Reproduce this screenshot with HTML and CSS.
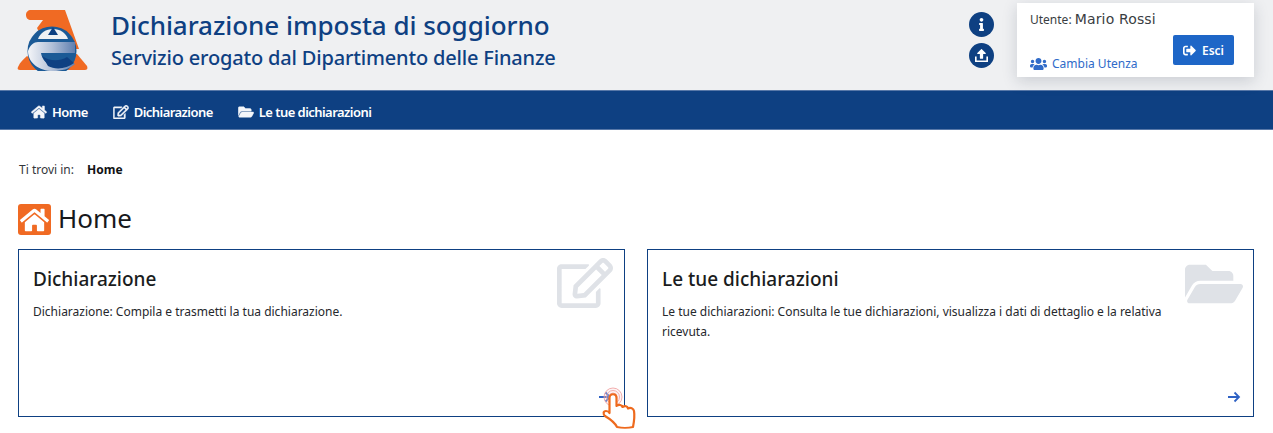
FILE: index.html
```html
<!DOCTYPE html>
<html lang="it">
<head>
<meta charset="utf-8">
<title>Dichiarazione imposta di soggiorno</title>
<link rel="stylesheet" href="styles.css">
</head>
<body>
<header class="top">
  <svg class="logo" viewBox="0 0 72 62" aria-hidden="true">
    <defs>
      <linearGradient id="eg" x1="0" x2="1" y1="0" y2="0">
        <stop offset="0" stop-color="#f4f5f8"/>
        <stop offset="0.5" stop-color="#b4c2d9"/>
        <stop offset="1" stop-color="#5f7fb0"/>
      </linearGradient>
    </defs>
    <path class="or" d="M14 1H48L62 40H30L20 19 26 11H14C11 11 9 9 9 6 9 3 11 1 14 1Z"/>
    <path class="or" d="M1 58C3 53 7 50 10 47L30 61H3C1 61 0 60 1 58Z"/>
    <path class="or" d="M52 45H60L70 57C71 60 70 61 67 61H47Z"/>
    <circle class="bl" cx="35" cy="42" r="24.500"/>
    <path fill="#f0f1f3" d="M21 30C23 24 29 20 36 20 43 20 49 24 51 30Z"/>
    <path fill="#0e4082" d="M36 18 41 26H31Z"/>
    <path fill="url(#eg)" d="M21 33H58V44H24C25 50 29 55 35 56 40 57 46 55 51 50L58 55C52 60 45 62 36 62 22 62 11 54 11 42 13 36 17 33 21 33Z"/>
    <path fill="#0e4082" d="M25 47C32 52 42 53 50 48L57 54C50 60 38 61 31 57Z"/>
  </svg>
  <div class="titles">
    <h1>Dichiarazione imposta di soggiorno</h1>
    <p>Servizio erogato dal Dipartimento delle Finanze</p>
  </div>
  <div class="roundbtns">
    <span class="round"><svg viewBox="0 0 192 512"><path fill="#fff" d="M20 424h20V280H20c-11 0-20-9-20-20v-48c0-11 9-20 20-20h112c11 0 20 9 20 20v212h20c11 0 20 9 20 20v48c0 11-9 20-20 20H20c-11 0-20-9-20-20v-48c0-11 9-20 20-20zM96 0C56 0 24 32 24 72s32 72 72 72 72-32 72-72S136 0 96 0z"/></svg></span>
    <span class="round"><svg viewBox="0 0 512 512"><path fill="#fff" d="M296 384h-80c-13 0-24-11-24-24V192h-88c-18 0-27-21-14-34L242 7c8-8 20-8 28 0l152 151c13 13 4 34-14 34h-88v168c0 13-11 24-24 24zM512 300v188c0 13-11 24-24 24H24c-13 0-24-11-24-24V300h64v148h384V300z"/></svg></span>
  </div>
  <aside class="user">
    <div class="who"><span class="lbl">Utente:</span> <span class="name">Mario Rossi</span></div>
    <div class="user-row">
      <a class="switch"><svg class="ic-users" viewBox="0 0 640 512"><path fill="currentColor" d="M96 224c35.3 0 64-28.7 64-64s-28.7-64-64-64-64 28.7-64 64 28.7 64 64 64zm448 0c35.3 0 64-28.7 64-64s-28.7-64-64-64-64 28.7-64 64 28.7 64 64 64zm32 32h-64c-17.6 0-33.5 7.1-45.1 18.6 40.3 22.1 68.9 62 75.1 109.4h66c17.7 0 32-14.3 32-32v-32c0-35.3-28.7-64-64-64zm-256 0c61.9 0 112-50.1 112-112S381.9 32 320 32 208 82.1 208 144s50.1 112 112 112zm76.8 32h-8.3c-20.8 10-43.9 16-68.5 16s-47.6-6-68.5-16h-8.3C179.6 288 128 339.6 128 403.2V432c0 26.5 21.5 48 48 48h288c26.5 0 48-21.5 48-48v-28.8c0-63.6-51.6-115.2-115.2-115.2zm-223.7-13.4C161.5 263.1 145.6 256 128 256H64c-35.3 0-64 28.7-64 64v32c0 17.7 14.3 32 32 32h65.9c6.3-47.4 34.9-87.3 75.2-109.4z"/></svg>Cambia Utenza</a>
      <a class="exit"><svg viewBox="0 0 512 512"><path fill="currentColor" d="M497 273L329 441c-15 15-41 4.500-41-17v-96H152c-13.300 0-24-10.700-24-24v-96c0-13.300 10.700-24 24-24h136V88c0-21.400 25.900-32 41-17l168 168c9.300 9.400 9.300 24.600 0 34zM192 436v-40c0-6.600-5.400-12-12-12H96c-17.700 0-32-14.300-32-32V160c0-17.700 14.300-32 32-32h84c6.600 0 12-5.400 12-12V76c0-6.600-5.400-12-12-12H96c-53 0-96 43-96 96v192c0 53 43 96 96 96h84c6.600 0 12-5.400 12-12z"/></svg>Esci</a>
    </div>
  </aside>
</header>
<nav class="nav">
  <a><svg class="ni" viewBox="0 0 576 512"><use href="#i-home"/></svg>Home</a>
  <a><svg class="ni" viewBox="0 0 576 512"><use href="#i-edit"/></svg>Dichiarazione</a>
  <a><svg class="ni" viewBox="0 0 576 512"><use href="#i-folder"/></svg>Le tue dichiarazioni</a>
</nav>
<main class="main">
  <div class="crumb"><span>Ti trovi in:</span><strong>Home</strong></div>
  <h2 class="page"><span class="badge"><svg viewBox="0 0 576 512"><use href="#i-home"/></svg></span><span class="page-t">Home</span></h2>
  <section class="cards">
    <article class="card">
      <svg class="bg bg-edit" viewBox="0 0 576 512"><use href="#i-edit"/></svg>
      <h3>Dichiarazione</h3>
      <p>Dichiarazione: Compila e trasmetti la tua dichiarazione.</p>
      <svg class="arrow" viewBox="0 0 14 14"><path d="M1 7H12M7.500 2.500 12 7 7.500 11.500"/></svg>
      <svg class="hand" viewBox="0 0 40 46">
        <circle class="p1" cx="13" cy="11" r="9"/><circle class="p2" cx="13" cy="11" r="6.500"/><circle class="p2" cx="13" cy="11" r="4"/>
        <path class="h" d="M9.500 12C9.500 7 16.500 7 16.500 12V20C19 18 22 19 22.500 21 25 19.500 27.500 20 28 22.500 30.500 21 33.500 22.500 34 25 35 31 34 36 33 41 29 42 21 42 17 41 15 37 10 33 5 30 3 28 3 25 6 25 8 25 9 26 9.500 27Z"/>
      </svg>
    </article>
    <article class="card">
      <svg class="bg" viewBox="0 0 576 512"><use href="#i-folder"/></svg>
      <h3>Le tue dichiarazioni</h3>
      <p>Le tue dichiarazioni: Consulta le tue dichiarazioni, visualizza i dati di dettaglio e la relativa ricevuta.</p>
      <svg class="arrow" viewBox="0 0 14 14"><path d="M1 7H12M7.500 2.500 12 7 7.500 11.500"/></svg>
    </article>
  </section>
</main>
<svg class="defs" aria-hidden="true">
  <symbol id="i-home" viewBox="0 0 576 512"><path fill="currentColor" d="M280.370 148.260L96 300.110V464a16 16 0 0 0 16 16l112.060-.29a16 16 0 0 0 15.920-16V368a16 16 0 0 1 16-16h64a16 16 0 0 1 16 16v95.640a16 16 0 0 0 16 16.050L464 480a16 16 0 0 0 16-16V300L295.670 148.260a12.190 12.190 0 0 0-15.300 0zM571.600 251.470L488 182.560V44.050a12 12 0 0 0-12-12h-56a12 12 0 0 0-12 12v72.610L318.470 43a48 48 0 0 0-61 0L4.340 251.470a12 12 0 0 0-1.600 16.900l25.500 31A12 12 0 0 0 45.150 301l235.220-193.740a12.190 12.190 0 0 1 15.300 0L530.900 301a12 12 0 0 0 16.900-1.600l25.500-31a12 12 0 0 0-1.700-16.930z"/></symbol>
  <symbol id="i-edit" viewBox="0 0 576 512"><path fill="currentColor" d="M402.300 344.900l32-32c5-5 13.700-1.500 13.700 5.700V464c0 26.500-21.500 48-48 48H48c-26.500 0-48-21.500-48-48V112c0-26.500 21.500-48 48-48h273.500c7.100 0 10.700 8.600 5.700 13.700l-32 32c-1.500 1.500-3.500 2.300-5.700 2.300H48v352h352V350.500c0-2.100.8-4.100 2.300-5.600zm156.600-201.800L296.300 405.700l-90.400 10c-26.200 2.900-48.500-19.200-45.600-45.600l10-90.400L432.900 17.100c22.900-22.900 59.900-22.900 82.700 0l43.200 43.200c22.900 22.900 22.900 60 .1 82.800zM460.100 174L402 115.900 216.200 301.800l-7.300 65.300 65.300-7.300L460.100 174zm64.800-79.700l-43.200-43.200c-4.100-4.100-10.800-4.100-14.800 0L436 82l58.100 58.100 30.900-30.900c4-4.200 4-10.800-.1-14.900z"/></symbol>
  <symbol id="i-folder" viewBox="0 0 576 512"><path fill="currentColor" d="M572.694 292.093L500.270 416.248A63.997 63.997 0 0 1 444.989 448H45.025c-18.523 0-30.064-20.093-20.731-36.093l72.424-124.155A64 64 0 0 1 152 256h399.964c18.523 0 30.064 20.093 20.730 36.093zM152 224h328v-48c0-26.510-21.490-48-48-48H272l-64-64H48C21.490 64 0 85.490 0 112v278.046l69.077-118.418C86.214 242.250 117.989 224 152 224z"/></symbol>
</svg>
</body>
</html>
```
FILE: styles.css
```css
* { box-sizing: border-box; }
html, body { margin: 0; height: 100%; overflow: hidden; }
body { background: #fff; color: #17191c; font-family: "Noto Sans", "Open Sans", sans-serif; }
h1, h2, h3, p { margin: 0; font-weight: 400; }
.defs { width: 0; height: 0; display: block; }

.top { position: relative; height: 90px; background: #eff0f2; display: flex; align-items: flex-start; padding: 7px 19px 0 17px; }
.logo { width: 72px; height: 62px; flex: none; margin-top: 2px; }
.or { fill: #f06a23; }
.bl { fill: #1b5a96; }
.titles { margin-left: 22px; color: #0e4082; }
.titles h1 { font-size: 26px; line-height: 36px; font-weight: 500; letter-spacing: -.05px; }
.titles p { font-size: 20px; line-height: 26px; margin-top: 2px; font-weight: 500; letter-spacing: -.17px; }
.roundbtns { margin-left: auto; margin-top: 5px; display: flex; flex-direction: column; gap: 6px; }
.round { width: 25px; height: 25px; border-radius: 50%; background: #0e4082; display: flex; align-items: center; justify-content: center; }
.round svg { height: 13px; width: 13px; }
.user { width: 237px; height: 74px; margin-left: 23px; margin-top: -4px; background: #fff; box-shadow: 0 4px 14px rgba(40,50,70,.18); padding: 7px 20px 0 13px; }
.who { font-size: 12px; line-height: 18px; color: #3a3d42; white-space: nowrap; }
.name { font-family: "DejaVu Sans", sans-serif; font-size: 14px; letter-spacing: .15px; }
.user-row { display: flex; justify-content: space-between; align-items: flex-start; margin-top: 6px; }
.switch { display: flex; align-items: center; gap: 5px; font-size: 12px; color: #2f6bc9; margin-top: 20px; line-height: 18px; }
.ic-users { width: 17px; height: 14px; }
.exit { width: 61px; height: 30px; background: #1e66c7; border-radius: 2px; color: #fff; font-size: 12px; font-weight: 600; display: flex; align-items: center; justify-content: center; gap: 6px; }
.exit svg { width: 13px; height: 13px; }

.nav { height: 40px; background: #0e4082; border-top: 1px solid #5878a8; border-bottom: 1px solid #5878a8; display: flex; align-items: center; padding: 3px 0 0 31px; gap: 25px; color: #fff; font-size: 13px; font-weight: 600; }
.nav a { display: flex; align-items: center; gap: 5px; letter-spacing: -.55px; }
.ni { width: 16px; height: 14px; color: #f4f6fa; stroke: currentColor; stroke-width: 16px; }

.main { padding: 0 19px 0 18px; }
.crumb { margin-top: 31px; padding-left: 1px; font-size: 12px; line-height: 17px; display: flex; gap: 13px; color: #33363b; }
.crumb strong { color: #101215; font-weight: 700; }
.page { display: flex; align-items: center; gap: 7px; margin-top: 26px; font-size: 26px; line-height: 32px; color: #17191c; }
.page-t { margin-top: -3px; }
.badge { width: 33px; height: 31px; background: #f06a23; border-radius: 3px; color: #fff; display: flex; align-items: center; justify-content: center; }
.badge svg { width: 29px; height: 26px; }
.cards { display: flex; gap: 22px; margin-top: 14px; }
.card { position: relative; flex: 1; height: 168px; border: 1px solid #0e4082; padding: 16px 14px; }
.card h3 { font-size: 19px; line-height: 26px; font-weight: 500; color: #1a1c20; }
.card p { margin-top: 10px; width: 510px; font-size: 12px; line-height: 20px; color: #26282c; }
.bg { position: absolute; top: 8px; right: 10px; width: 58px; height: 52px; color: #dfe2e7; }
.bg-edit { right: 11px; width: 56px; height: 50px; }
.arrow { position: absolute; right: 12px; bottom: 12px; width: 14px; height: 14px; fill: none; stroke: #2f62c4; stroke-width: 1.800; }
.hand { position: absolute; left: 581px; top: 136px; width: 40px; height: 46px; overflow: visible; }
.p1 { fill: #f8dcdc; fill-opacity: .3; stroke: #ef9a9a; stroke-width: .8; }
.p2 { fill: none; stroke: #ef9a9a; stroke-width: .8; }
.h { fill: #fff; stroke: #ee6a1e; stroke-width: 2.200; stroke-linejoin: round; }
```
